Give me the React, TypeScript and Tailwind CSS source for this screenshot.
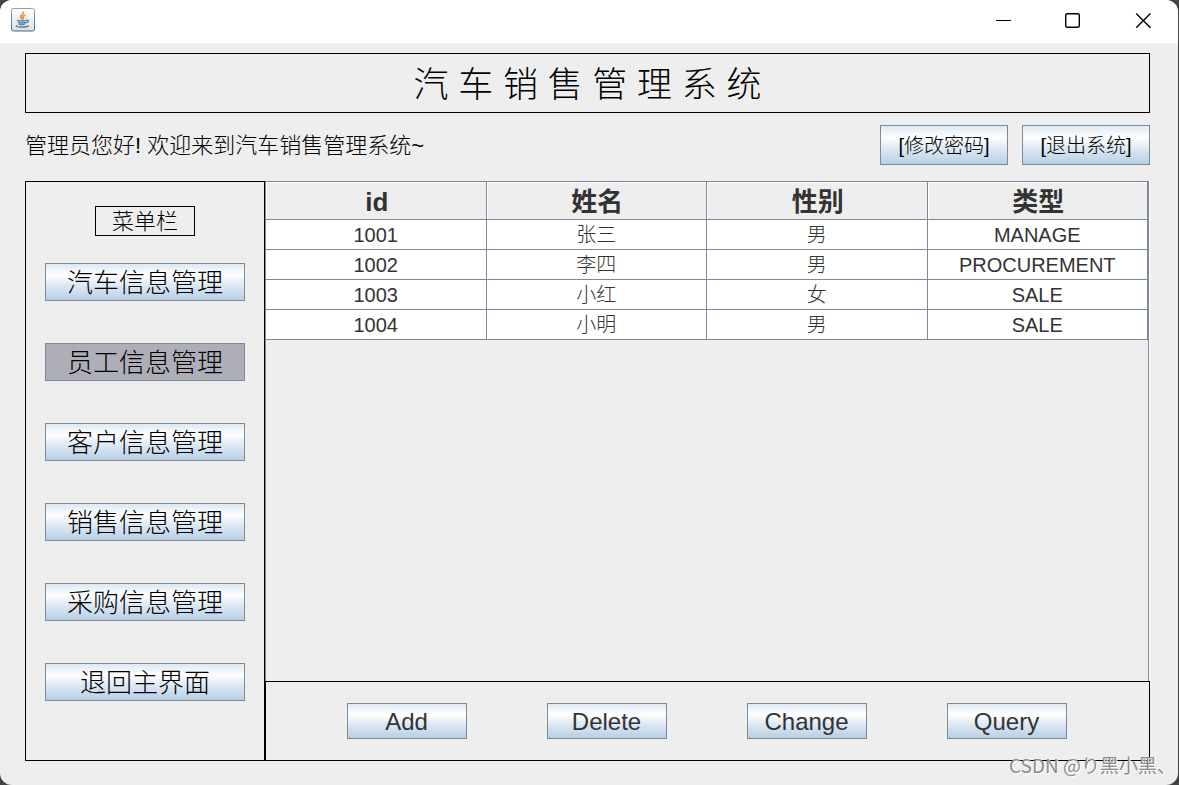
import React from 'react';

// --- DATA ---
interface Employee {
  id: string;
  name: string;
  gender: string;
  type: string;
}

const employees: Employee[] = [
  { id: '1001', name: '张三', gender: '男', type: 'MANAGE' },
  { id: '1002', name: '李四', gender: '男', type: 'PROCUREMENT' },
  { id: '1003', name: '小红', gender: '女', type: 'SALE' },
  { id: '1004', name: '小明', gender: '男', type: 'SALE' },
];

const columns = ['id', '姓名', '性别', '类型'];

const menuItems = [
  '汽车信息管理',
  '员工信息管理',
  '客户信息管理',
  '销售信息管理',
  '采购信息管理',
  '退回主界面',
];

const actions = ['Add', 'Delete', 'Change', 'Query'];

const metal = 'border border-[#7a8a99] bg-[linear-gradient(#dde8f3,#ffffff_30%,#dde8f3_60%,#b8cfe5)]';

// --- Title bar ---
const JavaIcon: React.FC = () => (
  <svg width="24" height="24" viewBox="0 0 24 24" fill="none" strokeLinecap="round" aria-hidden="true">
    <defs>
      <linearGradient id="java-frame" x1="0" y1="0" x2="0" y2="1">
        <stop offset="0" stopColor="#86a3b8" />
        <stop offset="1" stopColor="#41688a" />
      </linearGradient>
      <linearGradient id="java-face" x1="0" y1="0" x2="0" y2="1">
        <stop offset="0" stopColor="#ffffff" />
        <stop offset="1" stopColor="#dcdfe2" />
      </linearGradient>
    </defs>
    <rect x="0.5" y="0.5" width="23" height="22.5" rx="2" fill="url(#java-face)" stroke="url(#java-frame)" />
    <path d="M12.300 4.300c.8 2.200-3.300 2.600-2.800 4.700.2 1 1.300 1.300 1.500 2M13.800 7.300c-2 .7-2.600 1.400-1.700 2.200.5.500.3 1-.2 1.500" stroke="#f08228" strokeWidth="1.500" />
    <path d="M6.500 12.400c1.500.8 7 .8 8.500.1M7.300 14.400c1.500.8 5.500.8 7 0M8 16.200c1.500.6 4.200.6 5.500 0M15.500 12.200c3-.6 2.200 2.500-.8 2.700M5.500 17.600c-2 1.600 9.500 2 12 .3" stroke="#5382a1" strokeWidth="1.300" />
  </svg>
);

const TitleBar: React.FC = () => (
  <div className="flex h-[43px] items-start justify-between bg-white pl-[11px] pr-[19px]">
    <div className="pt-2">
      <JavaIcon />
    </div>
    <div className="flex gap-[38px] pt-1">
      <button type="button" aria-label="Minimize" className="flex h-8 w-8 items-center justify-center">
        <svg width="16" height="16" viewBox="0 0 16 16" stroke="#000" fill="none">
          <path d="M1 8.500h15" />
        </svg>
      </button>
      <button type="button" aria-label="Maximize" className="flex h-8 w-8 items-center justify-center">
        <svg width="16" height="16" viewBox="0 0 16 16" stroke="#000" strokeWidth="1.400" fill="none">
          <rect x="0.700" y="1.700" width="13.600" height="13.600" rx="1.500" />
        </svg>
      </button>
      <button type="button" aria-label="Close" className="flex h-8 w-8 items-center justify-center">
        <svg width="16" height="16" viewBox="0 0 16 16" stroke="#000" strokeWidth="1.400" fill="none">
          <path d="M1.200 1.500l14.300 14.300M15.500 1.500l-14.300 14.300" />
        </svg>
      </button>
    </div>
  </div>
);

// --- Left menu ---
const SideMenu: React.FC = () => (
  <nav className="flex w-60 shrink-0 flex-col items-center border border-black pt-6">
    <h2 className="flex h-[30px] w-[100px] items-center justify-center border border-black pt-0.5 text-[22px] leading-none">
      菜单栏
    </h2>
    <div className="mt-[27px] flex flex-col gap-[42px]">
      {menuItems.map((item) => (
        <button
          key={item}
          type="button"
          className={`flex h-[38px] w-[200px] items-center justify-center pt-0.5 text-[26px] leading-none ${
            item === '员工信息管理' ? 'border border-[#7a8a99] bg-[#aeaeb8]' : metal
          }`}
        >
          {item}
        </button>
      ))}
    </div>
  </nav>
);

// --- Employee table ---
const EmployeeTable: React.FC = () => (
  <div className="mr-px flex-1 border-x border-t border-[#7a8a99] shadow-[1px_0_0_#ffffff]">
    <table className="w-full table-fixed border-separate border-spacing-0 text-[#333333]">
      <thead>
        <tr className="h-[38px]">
          {columns.map((column) => (
            <th
              key={column}
              className="border-r border-b border-[#7a8a99] pt-0.5 pr-0 pb-0 pl-0.5 text-[26px] leading-none font-bold shadow-[inset_1px_1px_0_#ffffff]"
            >
              {column}
            </th>
          ))}
        </tr>
      </thead>
      <tbody className="bg-white text-xl leading-none">
        {employees.map((employee) => (
          <tr key={employee.id} className="h-[30px]">
            <td className="border-r border-b border-[#7a8a99] p-0 text-center">{employee.id}</td>
            <td className="border-r border-b border-[#7a8a99] p-0 text-center">{employee.name}</td>
            <td className="border-r border-b border-[#7a8a99] p-0 text-center">{employee.gender}</td>
            <td className="border-r border-b border-[#7a8a99] p-0 text-center">{employee.type}</td>
          </tr>
        ))}
      </tbody>
    </table>
  </div>
);

// --- MAIN COMPONENT ---
const App: React.FC = () => {
  return (
    <div className="min-h-screen bg-[#444444] pr-px font-['Liberation_Sans','Noto_Sans_CJK_SC',sans-serif] font-light text-black">
      <div className="relative flex min-h-screen flex-col overflow-hidden rounded-xl bg-[#eeeeee]">
        <TitleBar />
        <main className="flex flex-1 flex-col pt-2.5 pr-7 pb-6 pl-[25px]">
          <h1 className="flex h-[60px] items-center justify-center border border-black pt-0.5 text-[35px] leading-none">
            汽 车 销 售 管 理 系 统
          </h1>

          <div className="mt-3 flex h-10 items-center justify-between">
            <p className="pt-0.5 text-[22px] leading-none">管理员您好! 欢迎来到汽车销售管理系统~</p>
            <div className="flex gap-3.5">
              <button type="button" className={`h-10 w-32 pt-0.5 text-xl leading-none ${metal}`}>[修改密码]</button>
              <button type="button" className={`h-10 w-32 pt-0.5 text-xl leading-none ${metal}`}>[退出系统]</button>
            </div>
          </div>

          <div className="mt-4 flex flex-1">
            <SideMenu />
            <section className="flex flex-1 flex-col">
              <EmployeeTable />
              <div className="relative flex h-20 items-center justify-center gap-20 border border-black pr-0.5">
                {actions.map((action) => (
                  <button
                    key={action}
                    type="button"
                    className={`h-9 w-[120px] pt-0.5 text-2xl leading-none text-[#333333] ${metal}`}
                  >
                    {action}
                  </button>
                ))}
              </div>
            </section>
          </div>
        </main>

        <span className="absolute right-0.5 bottom-1.5 font-['Noto_Sans_CJK_SC',sans-serif] text-[19px] leading-7 font-normal text-[#8c8c8c] [text-shadow:1px_1px_0_#ffffff]">
          CSDN @り黑小黑、
        </span>
      </div>
    </div>
  );
};

export default App;
